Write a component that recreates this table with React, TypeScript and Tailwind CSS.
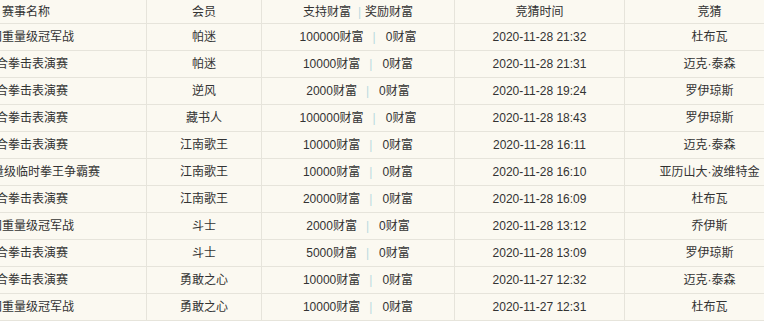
import React from "react";

type Row = {
  name: string;
  member: string;
  support: string;
  reward: string;
  time: string;
  pick: string;
};

const rows: Row[] = [
  { name: "英国重量级冠军战", member: "帕迷", support: "100000财富", reward: "0财富", time: "2020-11-28 21:32", pick: "杜布瓦" },
  { name: "综合拳击表演赛", member: "帕迷", support: "10000财富", reward: "0财富", time: "2020-11-28 21:31", pick: "迈克·泰森" },
  { name: "综合拳击表演赛", member: "逆风", support: "2000财富", reward: "0财富", time: "2020-11-28 19:24", pick: "罗伊琼斯" },
  { name: "综合拳击表演赛", member: "藏书人", support: "100000财富", reward: "0财富", time: "2020-11-28 18:43", pick: "罗伊琼斯" },
  { name: "综合拳击表演赛", member: "江南歌王", support: "10000财富", reward: "0财富", time: "2020-11-28 16:11", pick: "迈克·泰森" },
  { name: "WBC重量级临时拳王争霸赛", member: "江南歌王", support: "10000财富", reward: "0财富", time: "2020-11-28 16:10", pick: "亚历山大·波维特金" },
  { name: "综合拳击表演赛", member: "江南歌王", support: "20000财富", reward: "0财富", time: "2020-11-28 16:09", pick: "杜布瓦" },
  { name: "英国重量级冠军战", member: "斗士", support: "2000财富", reward: "0财富", time: "2020-11-28 13:12", pick: "乔伊斯" },
  { name: "综合拳击表演赛", member: "斗士", support: "5000财富", reward: "0财富", time: "2020-11-28 13:09", pick: "罗伊琼斯" },
  { name: "综合拳击表演赛", member: "勇敢之心", support: "10000财富", reward: "0财富", time: "2020-11-27 12:32", pick: "迈克·泰森" },
  { name: "英国重量级冠军战", member: "勇敢之心", support: "10000财富", reward: "0财富", time: "2020-11-27 12:31", pick: "杜布瓦" },
];

const cell =
  "flex items-center justify-center whitespace-nowrap border-r border-b border-[#e6e4db] overflow-hidden";

export default function App() {
  return (
    <div
      className="w-[764px] h-[321px] overflow-hidden bg-[#fbf9f1] text-[12px] text-[#333333]"
      style={{ fontFamily: '"Liberation Sans", "Noto Sans CJK SC", sans-serif' }}
    >
      <div className="ml-[-94px] w-[889px] grid grid-cols-[241px_115px_193px_170px_170px]">
        <div className={`${cell} h-[24px]`}>赛事名称</div>
        <div className={`${cell} h-[24px]`}>会员</div>
        <div className={`${cell} h-[24px]`}>
          <span>支持财富</span>
          <span className="ml-[7px] mr-[4px] text-[#b9d9e0]">|</span>
          <span>奖励财富</span>
        </div>
        <div className={`${cell} h-[24px]`}>竞猜时间</div>
        <div className={`${cell} h-[24px]`}>竞猜</div>

        {rows.map((r, i) => (
          <React.Fragment key={i}>
            <div className={`${cell} h-[27px]`}>{r.name}</div>
            <div className={`${cell} h-[27px]`}>{r.member}</div>
            <div className={`${cell} h-[27px]`}>
              <span>{r.support}</span>
              <span className="ml-[9px] mr-[10px] text-[#b9d9e0]">|</span>
              <span>{r.reward}</span>
            </div>
            <div className={`${cell} h-[27px]`}>{r.time}</div>
            <div className={`${cell} h-[27px]`}>{r.pick}</div>
          </React.Fragment>
        ))}
      </div>
    </div>
  );
}
